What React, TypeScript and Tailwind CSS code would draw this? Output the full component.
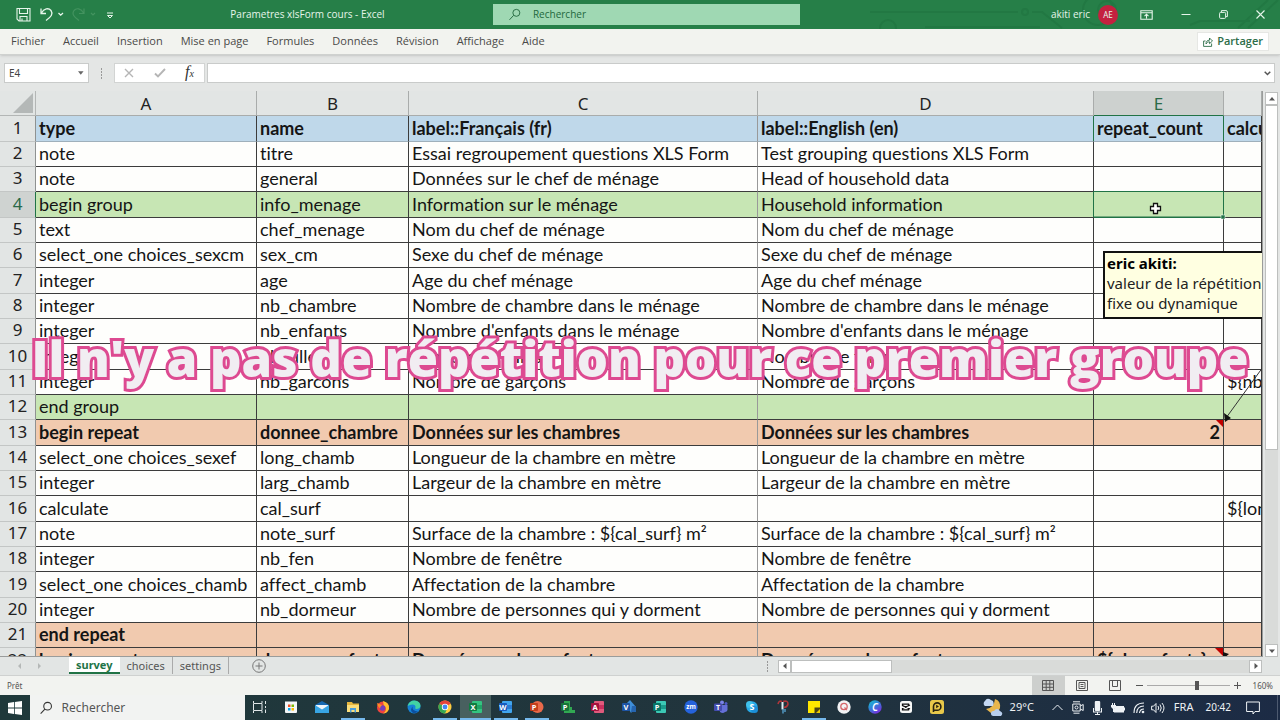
import { useState } from 'react';
import type { ReactNode } from 'react';
import clsx from 'clsx';

type Row = { cells: string[]; tone?: 'head' | 'group' | 'repeat'; bold?: boolean };

const rows: Row[] = [
  { cells: ['type', 'name', 'label::Français (fr)', 'label::English (en)', 'repeat_count', 'calculation'], tone: 'head', bold: true },
  { cells: ['note', 'titre', 'Essai regroupement questions XLS Form', 'Test grouping questions XLS Form', '', ''] },
  { cells: ['note', 'general', 'Données sur le chef de ménage', 'Head of household data', '', ''] },
  { cells: ['begin group', 'info_menage', 'Information sur le ménage', 'Household information', '', ''], tone: 'group' },
  { cells: ['text', 'chef_menage', 'Nom du chef de ménage', 'Nom du chef de ménage', '', ''] },
  { cells: ['select_one choices_sexcm', 'sex_cm', 'Sexe du chef de ménage', 'Sexe du chef de ménage', '', ''] },
  { cells: ['integer', 'age', 'Age du chef ménage', 'Age du chef ménage', '', ''] },
  { cells: ['integer', 'nb_chambre', 'Nombre de chambre dans le ménage', 'Nombre de chambre dans le ménage', '', ''] },
  { cells: ['integer', 'nb_enfants', "Nombre d'enfants dans le ménage", "Nombre d'enfants dans le ménage", '', ''] },
  { cells: ['integer', 'nb_filles', 'Nombre de filles', 'Nombre de filles', '', ''] },
  { cells: ['integer', 'nb_garcons', 'Nombre de garçons', 'Nombre de garçons', '', '${nb_enfants}'] },
  { cells: ['end group', '', '', '', '', ''], tone: 'group' },
  { cells: ['begin repeat', 'donnee_chambre', 'Données sur les chambres', 'Données sur les chambres', '2', ''], tone: 'repeat', bold: true },
  { cells: ['select_one choices_sexef', 'long_chamb', 'Longueur de la chambre en mètre', 'Longueur de la chambre en mètre', '', ''] },
  { cells: ['integer', 'larg_chamb', 'Largeur de la chambre en mètre', 'Largeur de la chambre en mètre', '', ''] },
  { cells: ['calculate', 'cal_surf', '', '', '', '${long_chamb}'] },
  { cells: ['note', 'note_surf', 'Surface de la chambre : ${cal_surf} m²', 'Surface de la chambre : ${cal_surf} m²', '', ''] },
  { cells: ['integer', 'nb_fen', 'Nombre de fenêtre', 'Nombre de fenêtre', '', ''] },
  { cells: ['select_one choices_chamb', 'affect_chamb', 'Affectation de la chambre', 'Affectation de la chambre', '', ''] },
  { cells: ['integer', 'nb_dormeur', 'Nombre de personnes qui y dorment', 'Nombre de personnes qui y dorment', '', ''] },
  { cells: ['end repeat', '', '', '', '', ''], tone: 'repeat', bold: true },
  { cells: ['begin repeat', 'donnee_enfants', 'Données sur les enfants', 'Données sur les enfants', '${nb_enfants}', ''], tone: 'repeat', bold: true },
];

const menus = ['Fichier', 'Accueil', 'Insertion', 'Mise en page', 'Formules', 'Données', 'Révision', 'Affichage', 'Aide'];
const columns = ['A', 'B', 'C', 'D', 'E', ''];

function TitleBar() {
  return (
    <header className="relative flex h-[29px] shrink-0 items-center bg-[#267f48] text-[#e6f5ea]">
      <svg className="pointer-events-none absolute right-0 top-0 h-[29px] w-[430px]" viewBox="0 0 430 29" fill="none" stroke="#227843" strokeWidth="2">
        <path d="M20 12H168M182 12H192L212 28M75 27H190M340 25L350 21H400M388 28L418 0M398 28L428 0" />
        <circle cx="38" cy="28" r="8" />
        <circle cx="175" cy="12" r="3" />
        <circle cx="248" cy="10" r="15" />
        <circle cx="257" cy="10" r="9" />
      </svg>
      <div className="relative flex w-[493px] shrink-0 items-center pl-4">
        <div className="flex w-[106px] items-center gap-1">
          <button aria-label="Enregistrer">
            <svg width="15" height="15" viewBox="0 0 15 15" fill="none" stroke="currentColor" strokeWidth="1.1">
              <path d="M1 1.5H14V14H3L1 12ZM3.5 1.5V6.5H11.5V1.5M4 14V9.5H11V14M6 11.5V14" />
            </svg>
          </button>
          <button aria-label="Annuler" className="ml-[5px]">
            <svg width="24" height="15" viewBox="0 0 24 15" fill="none" stroke="currentColor" strokeWidth="1.3">
              <path d="M1 1.5V6.5H6M1.4 6C4 1.5 8.5.5 11 3.5C13.5 7 11 10 6 13.5M18.5 6L20.7 8.2L23 6" />
            </svg>
          </button>
          <button aria-label="Rétablir" className="ml-1 text-[#43935f]">
            <svg width="24" height="15" viewBox="0 0 24 15" fill="none" stroke="currentColor" strokeWidth="1.2">
              <path d="M12 1.5V6.5H7M11.6 6C9 1.5 4.5.5 2 3.5C-.5 7 2 10 7 13.5M19 6L21 8L23 6" />
            </svg>
          </button>
          <button aria-label="Personnaliser" className="ml-[6px]">
            <svg width="8" height="8" viewBox="0 0 8 8" fill="none" stroke="currentColor">
              <path d="M1 2H7M1.5 4.5L4 7L6.5 4.5Z" />
            </svg>
          </button>
        </div>
        <h1 className="flex-1 whitespace-pre text-center font-['Open_Sans',sans-serif] text-[10px]">Parametres xlsForm cours - Excel</h1>
      </div>
      <label className="relative flex h-[21px] w-[307px] shrink-0 items-center bg-[#9fd8b3] pl-4 text-[#22683d]">
        <svg width="13" height="13" viewBox="0 0 13 13" fill="none" stroke="currentColor">
          <circle cx="8" cy="4.7" r="3.8" />
          <path d="M5 7.5L.5 12.3" />
        </svg>
        <input aria-label="Rechercher" placeholder="Rechercher" className="ml-3 w-full bg-transparent font-['Open_Sans',sans-serif] text-[10px] outline-none placeholder:text-[#22683d]" />
      </label>
      <div className="relative flex flex-1 items-center justify-end pr-[15px]">
        <span className="font-['Open_Sans',sans-serif] text-[10px]">akiti eric</span>
        <span className="ml-2 flex size-5 items-center justify-center rounded-full bg-[#c4213f] text-[8px]">AE</span>
        <button aria-label="Options du ruban" className="ml-[22px]">
          <svg width="13" height="10" viewBox="0 0 13 10" fill="none" stroke="currentColor" strokeWidth="1.1">
            <path d="M.8.8H12.2V9.2H.8ZM.8 2.8H12.2M6.5 8.5V4.5M4.5 6.2L6.5 4.3L8.5 6.2" />
          </svg>
        </button>
        <button aria-label="Réduire" className="ml-7">
          <svg width="10" height="10" viewBox="0 0 10 10" stroke="currentColor"><path d="M.5 4.5H9.5" /></svg>
        </button>
        <button aria-label="Restaurer" className="ml-7">
          <svg width="9" height="9" viewBox="0 0 9 9" fill="none" stroke="currentColor">
            <rect x=".6" y="2.4" width="6" height="6" rx="1" />
            <path d="M2.4 2V.6H7Q8.4.6 8.4 2V6.6H7" />
          </svg>
        </button>
        <button aria-label="Fermer" className="ml-7">
          <svg width="9" height="9" viewBox="0 0 9 9" stroke="currentColor" strokeWidth="1.1"><path d="M.5.5L8.5 8.5M8.5.5L.5 8.5" /></svg>
        </button>
      </div>
    </header>
  );
}

function Ribbon() {
  return (
    <nav className="flex h-[26px] shrink-0 items-center justify-between border-b border-[#cfd1cf] bg-[#f2f3ef] pl-[11px] pr-[11px] shadow-sm">
      <div className="flex items-center gap-[18px] font-['Open_Sans',sans-serif] text-[11px] text-[#4a4a48]">
        {menus.map((m) => (
          <button key={m}>{m}</button>
        ))}
      </div>
      <button className="flex h-[19px] items-center gap-1 border border-[#e6e7e4] bg-white px-[5px] font-['Open_Sans',sans-serif] text-[11px] font-semibold text-[#2d6d48]">
        <svg width="10" height="10" viewBox="0 0 10 10" fill="none" stroke="currentColor" strokeWidth=".9">
          <path d="M2.5 4H.6V9.4H8.6V6.5M3 7C3 4.5 4.2 3.2 6.5 3.2V1L9.5 4L6.5 6.6V4.8C5 4.8 4 5.5 3 7Z" />
        </svg>
        Partager
      </button>
    </nav>
  );
}

function FormulaBar() {
  return (
    <div className="flex h-9 shrink-0 items-center pl-1 pr-[5px]">
      <label className="flex h-5 w-[85px] shrink-0 items-center border border-[#c9cbca] bg-white px-1">
        <input aria-label="Zone Nom" defaultValue="E4" className="w-full bg-transparent text-[10px] text-[#444] outline-none" />
        <svg width="6" height="4" viewBox="0 0 6 4" fill="#666"><path d="M0 0H6L3 4Z" /></svg>
      </label>
      <svg className="mx-[11px]" width="3" height="11" viewBox="0 0 3 11" fill="#999">
        <path d="M1 0h1v2H1zM1 3h1v2H1zM1 6h1v2H1zM1 9h1v2H1z" />
      </svg>
      <div className="flex h-5 w-[91px] shrink-0 items-center justify-between border border-[#d2d4d3] bg-white pl-[9px] pr-[10px]">
        <button aria-label="Annuler la saisie">
          <svg width="10" height="10" viewBox="0 0 10 10" stroke="#b5b5b5" strokeWidth="1.4"><path d="M1 1L9 9M9 1L1 9" /></svg>
        </button>
        <button aria-label="Entrer">
          <svg width="12" height="10" viewBox="0 0 12 10" fill="none" stroke="#b5b5b5" strokeWidth="1.9"><path d="M1 5.5L4 8.5L11 1" /></svg>
        </button>
        <button className="font-['Liberation_Serif',serif] text-base italic leading-4 text-[#333]">
          f<span className="text-[10px]">x</span>
        </button>
      </div>
      <label className="ml-[2px] flex h-5 flex-1 items-center border border-[#c9cbca] bg-white pr-[3px]">
        <input aria-label="Barre de formule" className="w-full bg-transparent px-1 text-[10px] outline-none" />
        <svg width="7" height="5" viewBox="0 0 7 5" fill="none" stroke="#555" strokeWidth="1.5"><path d="M.7.7L3.5 3.5L6.3.7" /></svg>
      </label>
    </div>
  );
}

function Sheet() {
  return (
    <div className="relative min-w-0 flex-1 overflow-hidden border-b border-r border-[#9a9c9b] bg-[#e2e5e4]">
      <table className="w-full table-fixed border-separate border-spacing-0 whitespace-nowrap">
        <colgroup>
          <col className="w-9" />
          <col className="w-[221px]" />
          <col className="w-[152px]" />
          <col className="w-[349px]" />
          <col className="w-[336px]" />
          <col className="w-[130px]" />
          <col />
        </colgroup>
        <thead>
          <tr className="h-[25px] text-[17px] leading-[22px] text-[#222]">
            <th aria-label="Tout sélectionner" className="border-b border-r border-[#b3b6b5] p-0">
              <svg className="ml-auto mr-[2px]" width="20" height="20" viewBox="0 0 20 20" fill="#b4b8b7"><path d="M20 0V20H0Z" /></svg>
            </th>
            {columns.map((c, i) => (
              <th
                key={i}
                className={clsx(
                  'border-b border-r px-0 pb-0 pt-[2px] font-normal',
                  c === 'E' ? 'border-b-[#217346] border-r-[#a9acab] bg-[#cdd1cf] text-[#2a6a48]' : 'border-[#a9acab]',
                )}
              >
                {c}
              </th>
            ))}
          </tr>
        </thead>
        <tbody>
          {rows.map((row, r) => (
            <tr
              key={r}
              className={clsx(
                'font-[Lato,sans-serif] text-[18px] leading-[22px] text-[#151515] [font-variant-ligatures:none]',
                r % 3 === 0 ? 'h-[26px]' : 'h-[25px]',
                row.bold && 'font-bold',
                row.tone === 'head' && 'bg-[#bfd8ea]',
                row.tone === 'group' && 'bg-[#c7e6b4]',
                row.tone === 'repeat' && 'bg-[#f1caaf]',
                !row.tone && 'bg-[#fefefc]',
              )}
            >
              <th
                className={clsx(
                  "border-b border-r border-b-[#c3c6c5] px-0 pb-[2px] pt-0 font-['Noto_Sans',sans-serif] text-[17px] font-normal",
                  r === 3 ? 'border-r-[#217346] bg-[#cfd3d1] text-[#2a6a48]' : 'border-r-[#8f9291] bg-[#e2e5e4] text-[#222]',
                )}
              >
                {r + 1}
              </th>
              {row.cells.map((text, c) => (
                <td
                  key={c}
                  className={clsx(
                    'overflow-hidden border-b border-r px-[3px] pb-[2px] pt-0',
                    r === 3 && c === 4 ? 'border-[#217346]' : r === 0 ? 'border-b-[#9fb0bb]' : 'border-b-[#3c3c3c]',
                    c === 2 ? 'border-r-[#999]' : 'border-r-[#3c3c3c]',
                    c === 4 && text === '2' && 'text-right',
                  )}
                >
                  {text}
                </td>
              ))}
            </tr>
          ))}
        </tbody>
      </table>

      {/* selected cell, comment marks and comment arrow */}
      <svg className="pointer-events-none absolute left-0 top-0" width="1263" height="566" fill="none">
        <path d="M1093.5 25V50M1223.5 25V50M1093.5 100.5H1223.5V126H1093.5Z" stroke="#217346" />
        <rect x="1221" y="124" width="4" height="4" fill="#217346" stroke="#fff" strokeWidth=".5" />
        <path d="M1216 329H1223V336ZM1215 557H1223V565Z" fill="#c00000" />
        <path d="M1263 276L1226 327" stroke="#333" />
        <path d="M1225 331L1224 322L1231 327ZM1223 561L1223 568L1229 563Z" fill="#111" />
        <path d="M1153.5 112.5H1157.5V115.5H1160.5V119.5H1157.5V122.5H1153.5V119.5H1150.5V115.5H1153.5Z" fill="#fff" stroke="#111" strokeWidth="1.3" />
      </svg>
      <div className="absolute left-[1103px] top-40 w-[180px] whitespace-nowrap border-2 border-[#111] bg-[#ffffe1] px-[2px] pb-1 font-['Noto_Sans',sans-serif] text-[15px] leading-5 text-[#222]">
        <p className="font-bold text-black">eric akiti:</p>
        <p>valeur de la répétition</p>
        <p>fixe ou dynamique</p>
      </div>
    </div>
  );
}

function ScrollButton({ label, path }: { label: string; path: string }) {
  return (
    <button aria-label={label} className="flex size-[13px] shrink-0 items-center justify-center border border-[#bdbfbe] bg-white">
      <svg width="6" height="6" viewBox="0 0 6 6" fill="#555"><path d={path} /></svg>
    </button>
  );
}

function SheetTabs() {
  const [active, setActive] = useState('survey');
  return (
    <div className="flex h-[19px] shrink-0 items-center border-b border-[#cfd1d0] bg-[#e2e5e4] pr-[18px]">
      <svg className="ml-[18px] mr-7" width="23" height="6" viewBox="0 0 23 6" fill="#b5b8b7"><path d="M3 0V6L0 3ZM20 0V6L23 3Z" /></svg>
      <div className="flex h-full items-start text-[11px] leading-[15px] text-[#555]">
        {['survey', 'choices', 'settings'].map((t) => (
          <button
            key={t}
            onClick={() => setActive(t)}
            className={clsx(
              'h-[17px] px-[7px] pb-px',
              t === active ? 'border-b-2 border-[#217346] bg-white font-bold text-[#217346]' : 'border-r border-[#aaa]',
            )}
          >
            {t}
          </button>
        ))}
      </div>
      <button aria-label="Nouvelle feuille" className="ml-[23px]">
        <svg width="14" height="14" viewBox="0 0 14 14" fill="none" stroke="#777">
          <circle cx="7" cy="7" r="6.3" />
          <path d="M7 3.5V10.5M3.5 7H10.5" />
        </svg>
      </button>
      <div className="flex-1" />
      <svg className="mr-[9px]" width="3" height="11" viewBox="0 0 3 11" fill="#999">
        <path d="M1 0h1v2H1zM1 3h1v2H1zM1 6h1v2H1zM1 9h1v2H1z" />
      </svg>
      <div className="flex h-[13px] w-[484px] bg-[#d9dbd9]">
        <ScrollButton label="Défiler à gauche" path="M4.5 0V6L1 3Z" />
        <div className="w-[101px] border border-[#bdbfbe] bg-white" />
        <div className="flex-1" />
        <ScrollButton label="Défiler à droite" path="M1.5 0V6L5 3Z" />
      </div>
    </div>
  );
}

function StatusBar() {
  return (
    <div className="flex h-[19px] shrink-0 items-center bg-[#f2f3f0] pl-[7px] pr-[7px] text-[8px] text-[#555]">
      <span className="flex-1">Prêt</span>
      <button aria-label="Normal" className="flex h-full w-[33px] items-center justify-center bg-[#cdcfcd]">
        <svg width="12" height="11" viewBox="0 0 12 11" fill="none" stroke="#555"><path d="M.5.5H11.5V10.5H.5ZM.5 4H11.5M.5 7.3H11.5M4.2.5V10.5M7.8.5V10.5" /></svg>
      </button>
      <button aria-label="Mise en page" className="flex h-full w-[34px] items-center justify-center">
        <svg width="12" height="11" viewBox="0 0 12 11" fill="none" stroke="#555"><path d="M.5.5H11.5V10.5H.5ZM3 2.5H9V8.5H3ZM4.5 4.5H7.5M4.5 6.5H7.5" /></svg>
      </button>
      <button aria-label="Avec sauts de page" className="flex h-full w-[33px] items-center justify-center">
        <svg width="12" height="11" viewBox="0 0 12 11" fill="none" stroke="#555"><path d="M.5.5H11.5V10.5H.5ZM3.5.5V6.5H8.5V.5" /></svg>
      </button>
      <button aria-label="Zoom arrière" className="ml-1">
        <svg width="7" height="7" viewBox="0 0 7 7" stroke="#555"><path d="M0 3.5H7" /></svg>
      </button>
      <input
        type="range"
        aria-label="Zoom"
        min={0}
        max={100}
        defaultValue={61}
        className="mx-1 h-3 w-[83px] appearance-none bg-[linear-gradient(#aaa,#aaa)] bg-[length:100%_1px] bg-center bg-no-repeat [&::-webkit-slider-thumb]:h-[9px] [&::-webkit-slider-thumb]:w-1 [&::-webkit-slider-thumb]:appearance-none [&::-webkit-slider-thumb]:bg-[#555]"
      />
      <button aria-label="Zoom avant">
        <svg width="7" height="7" viewBox="0 0 7 7" stroke="#555"><path d="M0 3.5H7M3.5 0V7" /></svg>
      </button>
      <span className="ml-3">160%</span>
    </div>
  );
}

function OfficeIcon({ letter, dark, mid, light, round }: { letter: string; dark: string; mid: string; light: string; round?: boolean }) {
  return (
    <svg width="14" height="14" viewBox="0 0 14 14">
      {round ? <circle cx="7.5" cy="7" r="6" fill={light} /> : <rect x="3" y="1" width="10" height="12" rx="1" fill={light} />}
      {!round && <path d="M3 5H13V9H3Z" fill={mid} />}
      <rect x="0" y="3" width="8" height="8" rx="1" fill={dark} />
      <text x="4" y="9.7" textAnchor="middle" fontSize="7.5" fontWeight="700" fill="#fff">{letter}</text>
    </svg>
  );
}

const apps: { name: string; icon: ReactNode; open?: boolean; active?: boolean }[] = [
  {
    name: 'Affichage des tâches',
    icon: (
      <svg width="14" height="14" viewBox="0 0 14 14" fill="none" stroke="#dfe6e8">
        <path d="M.5 1V3.5H9V1M.5 13V10.5H9V13M.5 4V10M9 4V10M12.5 1V4M12.5 9.5V13M12.5 6V8" />
      </svg>
    ),
  },
  {
    name: 'Microsoft Store',
    icon: (
      <svg width="14" height="14" viewBox="0 0 14 14">
        <path d="M1 1.5H13V12Q13 13 12 13H2Q1 13 1 12Z" fill="#f3f6f7" />
        <path d="M4 4.5H6.5V7H4Z" fill="#f25022" /><path d="M7.5 4.5H10V7H7.5Z" fill="#7fba00" />
        <path d="M4 8H6.5V10.5H4Z" fill="#00a4ef" /><path d="M7.5 8H10V10.5H7.5Z" fill="#ffb900" />
      </svg>
    ),
  },
  {
    name: 'Courrier',
    icon: (
      <svg width="14" height="14" viewBox="0 0 14 14">
        <path d="M0 5L7 1L14 5V13H0Z" fill="#1668b0" />
        <path d="M1 5H13V10H1Z" fill="#eef5fa" />
        <path d="M0 5L7 9.5L14 5V13H0Z" fill="#38a5e4" />
      </svg>
    ),
  },
  {
    name: 'Explorateur de fichiers',
    open: true,
    icon: (
      <svg width="14" height="14" viewBox="0 0 14 14">
        <path d="M1 2H6L7 3.5H13V12H1Z" fill="#e6b73f" />
        <path d="M1 5H13V12H1Z" fill="#fbdf7c" />
        <path d="M4 8H10V12.5H8.5V10H5.5V12.5H4Z" fill="#4b9fdd" />
      </svg>
    ),
  },
  {
    name: 'Firefox',
    icon: (
      <svg width="14" height="14" viewBox="0 0 14 14">
        <circle cx="7" cy="7.5" r="6" fill="#f0443e" />
        <path d="M7 1Q14 3 13 9Q11 13.5 7 13.5Q11 11 9.5 7Q7 5 7 1Z" fill="#ffbd2f" />
        <circle cx="6.5" cy="8" r="2.8" fill="#7240bc" />
        <path d="M1 3Q3 4 6 5Q4 6.5 4 8.5Q1 6 1 3Z" fill="#ff8a25" />
      </svg>
    ),
  },
  {
    name: 'Edge',
    icon: (
      <svg width="14" height="14" viewBox="0 0 14 14">
        <circle cx="7" cy="7" r="6.5" fill="#1683d8" />
        <path d="M.7 6Q2 .5 7.5.5Q13.5 1 13.5 6Q13 9 9 9Q7.5 8.5 8.5 7Q8.5 4.5 5.5 4.5Q2.5 4.5.7 6Z" fill="#42d3a4" />
        <path d="M5.5 6.5Q5 11 11 11.5Q9 13.5 6 13Q2.5 11 5.5 6.5Z" fill="#0d4f9e" />
      </svg>
    ),
  },
  {
    name: 'Chrome',
    open: true,
    icon: (
      <svg width="14" height="14" viewBox="0 0 14 14">
        <circle cx="7" cy="7" r="6.5" fill="#ffcd40" />
        <path d="M7 7L1.4 3.7A6.5 6.5 0 0 1 12.6 3.7Z" fill="#e5443a" />
        <path d="M7 7L1.4 3.7A6.5 6.5 0 0 0 7 13.5L9 9Z" fill="#35a853" />
        <circle cx="7" cy="7" r="3.2" fill="#fff" /><circle cx="7" cy="7" r="2.4" fill="#4286f4" />
      </svg>
    ),
  },
  { name: 'Excel', open: true, active: true, icon: <OfficeIcon letter="X" dark="#107c41" mid="#21a366" light="#33c481" /> },
  { name: 'Word', open: true, icon: <OfficeIcon letter="W" dark="#185abd" mid="#2b7cd3" light="#41a5ee" /> },
  { name: 'PowerPoint', open: true, icon: <OfficeIcon letter="P" dark="#c43e1c" mid="#ed6c47" light="#e8694a" round /> },
  {
    name: 'Project',
    icon: (
      <svg width="14" height="14" viewBox="0 0 14 14">
        <path d="M3 1H9V7H11V10H14V13H3Z" fill="#31a852" />
        <rect y="3" width="8" height="8" rx="1" fill="#17733a" />
        <text x="4" y="9.7" textAnchor="middle" fontSize="7.5" fontWeight="700" fill="#fff">P</text>
      </svg>
    ),
  },
  { name: 'Access', icon: <OfficeIcon letter="A" dark="#a4123f" mid="#c9305e" light="#e05a7c" /> },
  {
    name: 'Visio',
    icon: (
      <svg width="14" height="14" viewBox="0 0 14 14">
        <path d="M4 4L8 0L14 7L9 13Z" fill="#3f8fd9" /><path d="M10 6L14 6V12H9Z" fill="#2665af" />
        <rect y="3" width="8" height="8" rx="1" fill="#1e55a5" />
        <text x="4" y="9.7" textAnchor="middle" fontSize="7.5" fontWeight="700" fill="#fff">V</text>
      </svg>
    ),
  },
  { name: 'Publisher', icon: <OfficeIcon letter="P" dark="#077568" mid="#1a9b8b" light="#3cc9b5" /> },
  {
    name: 'Zoom',
    icon: (
      <svg width="14" height="14" viewBox="0 0 14 14">
        <circle cx="7" cy="7" r="6.7" fill="#2563dd" />
        <text x="7" y="9.2" textAnchor="middle" fontSize="6.5" fontWeight="700" fill="#fff">zm</text>
      </svg>
    ),
  },
  {
    name: 'Teams',
    icon: (
      <svg width="14" height="14" viewBox="0 0 14 14">
        <circle cx="8" cy="2.5" r="2" fill="#7b83eb" /><circle cx="12" cy="3.5" r="1.5" fill="#5059c9" />
        <path d="M5 5H13.5V10Q13 12 11 12Q9 14 6 12Z" fill="#6570d8" />
        <rect y="3.5" width="8" height="7.5" rx="1" fill="#444db0" />
        <text x="4" y="9.7" textAnchor="middle" fontSize="7" fontWeight="700" fill="#fff">T</text>
      </svg>
    ),
  },
  {
    name: 'Skype',
    icon: (
      <svg width="14" height="14" viewBox="0 0 14 14">
        <circle cx="7" cy="7" r="5.7" fill="#27a9e8" /><circle cx="4.5" cy="4.5" r="3.5" fill="#3fc1ec" /><circle cx="9.5" cy="9.5" r="3.5" fill="#1b8fd8" />
        <text x="7" y="10.2" textAnchor="middle" fontSize="9" fontWeight="700" fill="#fff">S</text>
      </svg>
    ),
  },
  {
    name: 'Outil Capture',
    icon: (
      <svg width="14" height="14" viewBox="0 0 14 14" fill="none">
        <path d="M2 4Q3 0 6 1.5M7 1.5Q12 0 12 4Q11.5 7 8 7.5" stroke="#b3353a" strokeWidth="1.6" />
        <path d="M6.5 2V9.5" stroke="#e3edf3" strokeWidth="2" /><path d="M7 9V13.5M9 9V12" stroke="#5aa7d6" strokeWidth="1.3" />
      </svg>
    ),
  },
  {
    name: 'Pense-bêtes',
    open: true,
    icon: (
      <svg width="14" height="14" viewBox="0 0 14 14">
        <path d="M1 1H13V8L8 13H1Z" fill="#ffe600" /><path d="M7.5 13V7.5H13V13Z" fill="#4a4216" /><path d="M9 13L13 9V13Z" fill="#e9c800" />
      </svg>
    ),
  },
  {
    name: 'QCM',
    icon: (
      <svg width="14" height="14" viewBox="0 0 14 14" fill="none">
        <circle cx="7" cy="7" r="6.7" fill="#f2f3f5" /><circle cx="7" cy="6.5" r="3.2" stroke="#d5666b" strokeWidth="1.3" />
        <path d="M7.5 7.5L9.8 10.2" stroke="#d5666b" strokeWidth="1.3" />
      </svg>
    ),
  },
  {
    name: 'Canva',
    icon: (
      <svg width="14" height="14" viewBox="0 0 14 14">
        <defs><linearGradient id="canva" x1="0" y1="0" x2=".7" y2="1"><stop stopColor="#13c8cf" /><stop offset=".5" stopColor="#347fd9" /><stop offset="1" stopColor="#7a2ce0" /></linearGradient></defs>
        <circle cx="7" cy="7" r="6.7" fill="url(#canva)" />
        <text x="7" y="10.5" textAnchor="middle" fontSize="10" fontStyle="italic" fontWeight="600" fill="#fff">C</text>
      </svg>
    ),
  },
  {
    name: 'CapCut',
    icon: (
      <svg width="14" height="14" viewBox="0 0 14 14" fill="none">
        <rect x="1" y="1" width="12" height="12" rx="2.5" fill="#f7f8f8" />
        <path d="M9.5 5.5V4.2H3.5V5.5L11 9M9.5 8.5V9.8H3.5V8.5L11 5" stroke="#111" strokeWidth="1.3" />
      </svg>
    ),
  },
  {
    name: 'PotPlayer',
    icon: (
      <svg width="14" height="14" viewBox="0 0 14 14" fill="none">
        <rect width="14" height="14" rx="2.5" fill="#e8c84a" />
        <path d="M3.5 12V6.5A3.7 3.7 0 1 1 7.2 10.3H3.5" stroke="#2a2410" strokeWidth="1.6" />
        <path d="M6.2 4.8L9 6.5L6.2 8.2Z" fill="#2a2410" />
      </svg>
    ),
  },
];

function Taskbar() {
  return (
    <footer className="flex h-[25px] shrink-0 items-center bg-[linear-gradient(90deg,#1f393b,#21343d_60%,#1c2b45)] text-[#eef2f5]">
      <button aria-label="Démarrer" className="flex h-full w-[30px] shrink-0 items-center justify-center">
        <svg width="14" height="14" viewBox="0 0 14 14" fill="#fff"><path d="M0 2L6 1V6.6H0ZM6.8.9L14 0V6.6H6.8ZM0 7.4H6V13L0 12ZM6.8 7.4H14V14L6.8 13.1Z" /></svg>
      </button>
      <label className="flex h-full w-[215px] shrink-0 items-center bg-[#f2f3f2] pl-[10px]">
        <svg width="14" height="14" viewBox="0 0 14 14" fill="none" stroke="#333" strokeWidth="1.2">
          <circle cx="8.5" cy="5" r="4.3" />
          <path d="M5.5 8.2L.7 13.2" />
        </svg>
        <input aria-label="Rechercher dans Windows" placeholder="Rechercher" className="ml-[9px] w-full bg-transparent text-xs outline-none placeholder:text-[#555]" />
      </label>
      <div className="flex h-full w-[707px] shrink-0">
        {apps.map((a) => (
          <button key={a.name} aria-label={a.name} className={clsx('flex h-full flex-1 flex-col items-center', a.active && 'bg-[#48605f]')}>
            <span className="flex flex-1 items-center">{a.icon}</span>
            <span className={clsx('h-[2px]', a.open && 'bg-[#76b9ed]', a.active ? 'w-full' : 'w-6')} />
          </button>
        ))}
      </div>
      <div className="flex flex-1 items-center justify-end text-[10px]">
        <svg width="21" height="19" viewBox="0 0 21 19">
          <path d="M13 1Q19 3 18 10Q16 16 9 15L4 11Q12 10 13 1Z" fill="#e9b64d" />
          <path d="M3 8A3 3 0 0 1 3 3Q5-1 9 2Q13 3 11 8Z" fill="#c5d8f2" />
          <path d="M11 18A2.5 2.5 0 0 1 12 13Q15 9 18 13Q22 15 19 18Z" fill="#b9cfee" />
        </svg>
        <span className="ml-[7px] text-[11px]">29°C</span>
        <svg className="ml-[18px]" width="11" height="7" viewBox="0 0 11 7" fill="none" stroke="currentColor"><path d="M.5 6L5.5 1L10.5 6" /></svg>
        <svg className="ml-[9px]" width="12" height="13" viewBox="0 0 12 13" fill="none" stroke="currentColor"><path d="M1 .8H8M1.5 12.2H7.5M.8 3H8.2V10H.8ZM8.2 5L11.2 3.5V9.5L8.2 8" /><circle cx="4.5" cy="6.5" r="1.5" /></svg>
        <svg className="ml-[9px]" width="9" height="14" viewBox="0 0 9 14" fill="currentColor"><rect x="1.8" width="5.4" height="10" rx="1" /><path d="M0 7H1V10.5H8V7H9V11.5H5V13H7V14H2V13H4V11.5H0Z" /></svg>
        <svg className="ml-[9px]" width="14" height="10" viewBox="0 0 14 10" fill="currentColor"><path d="M4 3H13V4.5H14V7.5H13V9.5H3V6Z" /><path d="M1 0V2H0V4L2 6V9H3V6L5 4V2H4V0H3V2H2V0Z" /></svg>
        <svg className="ml-2" width="12" height="12" viewBox="0 0 12 12" fill="none" stroke="currentColor" strokeWidth="1.1"><path d="M1 11Q1 1 11 1M3.7 11Q4 4 11 4M6.5 11Q7 7 11 7" /><circle cx="10" cy="10" r=".8" fill="currentColor" /></svg>
        <svg className="ml-[6px]" width="14" height="12" viewBox="0 0 14 12" fill="none" stroke="currentColor"><path d="M.6 4.2H2.5L5 1.5V10.5L2.5 7.8H.6ZM7 4Q8.5 6 7 8M9 2.5Q11.5 6 9 9.5M11 1Q15 6 11 11" /></svg>
        <span className="ml-[9px] text-[11px]">FRA</span>
        <span className="ml-3">20:42</span>
        <svg className="ml-[15px] mr-[17px]" width="14" height="14" viewBox="0 0 14 14" fill="none" stroke="currentColor"><path d="M.6 1H13.4V10.5H9L7 13L7 10.5H.6Z" /></svg>
        <span className="mr-[2px] h-[25px] w-px bg-[#4d5a70]" />
      </div>
    </footer>
  );
}

export default function App() {
  return (
    <div className="relative flex h-screen min-h-[480px] flex-col overflow-hidden bg-[#e4e6e5] font-['Noto_Sans',sans-serif]">
      <TitleBar />
      <Ribbon />
      <FormulaBar />
      <main className="flex min-h-0 flex-1">
        <Sheet />
        <div className="flex w-[17px] shrink-0 flex-col pl-[2px] pt-px">
          <ScrollButton label="Défiler vers le haut" path="M0 4.5H6L3 1Z" />
          <div className="flex w-[13px] flex-1 flex-col bg-[#d9dbd9]">
            <div className="h-[64%] border border-[#bdbfbe] bg-white" />
          </div>
          <ScrollButton label="Défiler vers le bas" path="M0 1.5H6L3 5Z" />
        </div>
      </main>
      <SheetTabs />
      <StatusBar />
      <Taskbar />
      <p className="pointer-events-none absolute inset-x-0 top-[328px] whitespace-nowrap text-center font-['Open_Sans',sans-serif] text-[49px] font-extrabold leading-[60px] text-[#f1edf2] [-webkit-text-stroke:6px_#dd4a91] [paint-order:stroke_fill] [stroke-linejoin:round]">
        Il n'y a pas de répétition pour ce premier groupe
      </p>
    </div>
  );
}
